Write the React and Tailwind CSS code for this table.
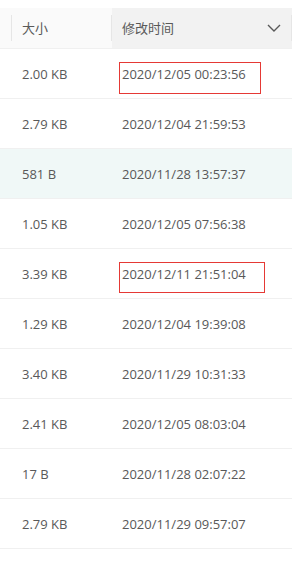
import React from "react";

const rows = [
  ["2.00 KB", "2020/12/05 00:23:56", false, 1],
  ["2.79 KB", "2020/12/04 21:59:53", false, 0],
  ["581 B", "2020/11/28 13:57:37", true, 0],
  ["1.05 KB", "2020/12/05 07:56:38", false, 0],
  ["3.39 KB", "2020/12/11 21:51:04", false, 2],
  ["1.29 KB", "2020/12/04 19:39:08", false, 0],
  ["3.40 KB", "2020/11/29 10:31:33", false, 0],
  ["2.41 KB", "2020/12/05 08:03:04", false, 0],
  ["17 B", "2020/11/28 02:07:22", false, 0],
  ["2.79 KB", "2020/11/29 09:57:07", false, 0],
];

export default function App() {
  return (
    <div
      className="w-[296px] h-[569px] bg-white pt-[8px] text-[13px] text-[#595959]"
      style={{ fontFamily: '"Open Sans", "Noto Sans CJK SC", sans-serif' }}
    >
      <div className="w-[292px]">
        <div className="flex h-[41px] border-b border-[#f0f0f0]">
          <div className="w-[12px] bg-[#fafafa] flex items-center justify-end">
            <div className="w-px h-[26px] bg-[#e6e6e6]" />
          </div>
          <div className="w-[100px] bg-[#fafafa] flex items-center justify-between pl-[10px]">
            <span className="pt-[2px]">大小</span>
            <div className="w-px h-[26px] bg-[#e6e6e6]" />
          </div>
          <div className="flex-1 bg-[#f2f2f2] flex items-center pl-[10px]">
            <span className="flex-1 pt-[2px]">修改时间</span>
            <svg width="14" height="8" viewBox="0 0 14 8" className="mr-[10px]">
              <path d="M1 1 L7 7 L13 1" fill="none" stroke="#595959" strokeWidth="1.4" />
            </svg>
            <div className="w-px h-[26px] bg-[#e6e6e6]" />
          </div>
        </div>
        {rows.map(([size, time, hl, box], i) => (
          <div
            key={i}
            className={`relative flex h-[50px] items-center pt-[3px] border-b border-[#f0f0f0] ${hl ? "bg-[#f0f8f7]" : ""}`}
          >
            <div className="w-[112px] pl-[22px]">{size}</div>
            <div className="flex-1 pl-[10px]">{time}</div>
            {box === 1 && (
              <div className="absolute left-[119px] top-[13px] w-[142px] h-[32px] border border-[#e53935]" />
            )}
            {box === 2 && (
              <div className="absolute left-[119px] top-[13px] w-[146px] h-[31px] border border-[#e53935]" />
            )}
          </div>
        ))}
      </div>
    </div>
  );
}
